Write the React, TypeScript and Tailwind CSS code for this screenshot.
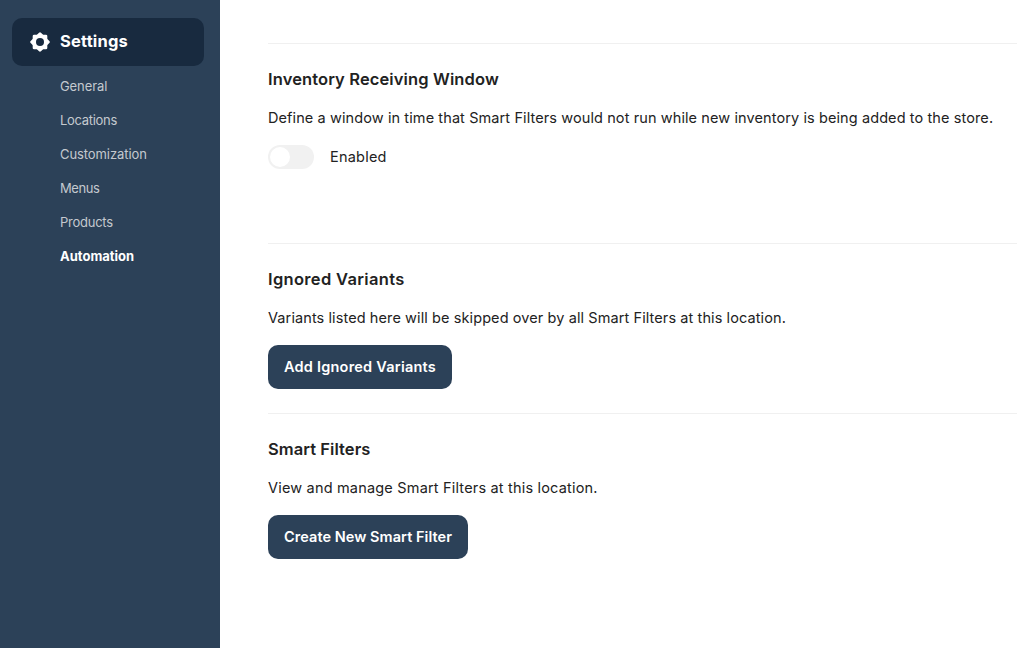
import type { ReactNode } from "react";

const links = [
  { name: "General", className: "tracking-[-0.08px] text-[#c4c9cf]" },
  { name: "Locations", className: "tracking-[-0.3px] text-[#c4c9cf]" },
  { name: "Customization", className: "tracking-[-0.08px] text-[#c4c9cf]" },
  { name: "Menus", className: "tracking-[-0.4px] text-[#c4c9cf]" },
  { name: "Products", className: "tracking-[-0.25px] text-[#c4c9cf]" },
  { name: "Automation", className: "font-bold text-white" },
];

function GearIcon() {
  return (
    <svg className="h-5 w-5" viewBox="0 0 20 20">
      <g fill="#fff">
        <rect x="2.7" y="2.7" width="14.6" height="14.6" rx="1.4" />
        <rect
          x="2.7"
          y="2.7"
          width="14.6"
          height="14.6"
          rx="1.4"
          transform="rotate(45 10 10)"
        />
      </g>
      <circle cx="10" cy="10" r="4" fill="#182a3f" />
    </svg>
  );
}

function Sidebar() {
  return (
    <aside className="w-[220px] shrink-0 bg-[#2c4158] px-3 pt-[18px]">
      <div className="flex h-12 w-48 items-center gap-2.5 rounded-[10px] bg-[#182a3f] pl-[18px] text-[16.5px] font-bold text-white">
        <GearIcon />
        <span className="pb-0.5 tracking-[0.18px]">Settings</span>
      </div>
      <nav className="flex flex-col gap-3.5 pt-2.5 pl-12 text-[13px] leading-5">
        {links.map((link) => (
          <a key={link.name} className={link.className}>
            {link.name}
          </a>
        ))}
      </nav>
    </aside>
  );
}

type SectionProps = {
  title: ReactNode;
  description: ReactNode;
  className: string;
  children: ReactNode;
};

function Section({ title, description, className, children }: SectionProps) {
  return (
    <section className={`border-t border-[#f0f0f0] pt-[23px] ${className}`}>
      <h2 className="text-[16.5px] leading-6 font-semibold">{title}</h2>
      <p className="mt-[17px] text-[14.5px] leading-5 whitespace-nowrap">
        {description}
      </p>
      {children}
    </section>
  );
}

export default function App() {
  return (
    <div className="flex h-screen overflow-hidden bg-white font-['Inter',sans-serif] text-[#222]">
      <Sidebar />
      <main className="min-w-0 flex-1 pt-[43px] pl-12">
        <Section
          className="h-[200px]"
          title={
            <span className="tracking-[0.12px]">Inventory Receiving Window</span>
          }
          description={
            <span className="tracking-[0.1px]">
              Define a window in time that Smart Filters would not run while new
              inventory is being added to the store.
            </span>
          }
        >
          <div className="mt-[17px] flex items-center gap-4">
            <button className="h-6 w-[46px] rounded-full bg-[#f1f1f1] p-0.5">
              <span className="block h-5 w-5 rounded-full bg-white" />
            </button>
            <span className="text-[14.5px] tracking-[0.22px]">Enabled</span>
          </div>
        </Section>
        <Section
          className="h-[170px]"
          title={<span className="tracking-[0.33px]">Ignored Variants</span>}
          description={
            <span className="tracking-[0.095px]">
              Variants listed here will be skipped over by all Smart Filters at
              this location.
            </span>
          }
        >
          <button className="mt-[17px] h-11 w-[184px] rounded-[10px] bg-[#2c4158] text-[14.5px] font-semibold tracking-[0.22px] whitespace-nowrap text-white">
            Add Ignored Variants
          </button>
        </Section>
        <Section
          className="h-[170px]"
          title={<span className="tracking-[0.07px]">Smart Filters</span>}
          description={
            <span className="tracking-[0.185px]">
              View and manage Smart Filters at this location.
            </span>
          }
        >
          <button className="mt-[17px] h-11 w-[200px] rounded-[10px] bg-[#2c4158] text-[14.5px] font-semibold tracking-[0.05px] whitespace-nowrap text-white">
            Create New Smart Filter
          </button>
        </Section>
      </main>
    </div>
  );
}
